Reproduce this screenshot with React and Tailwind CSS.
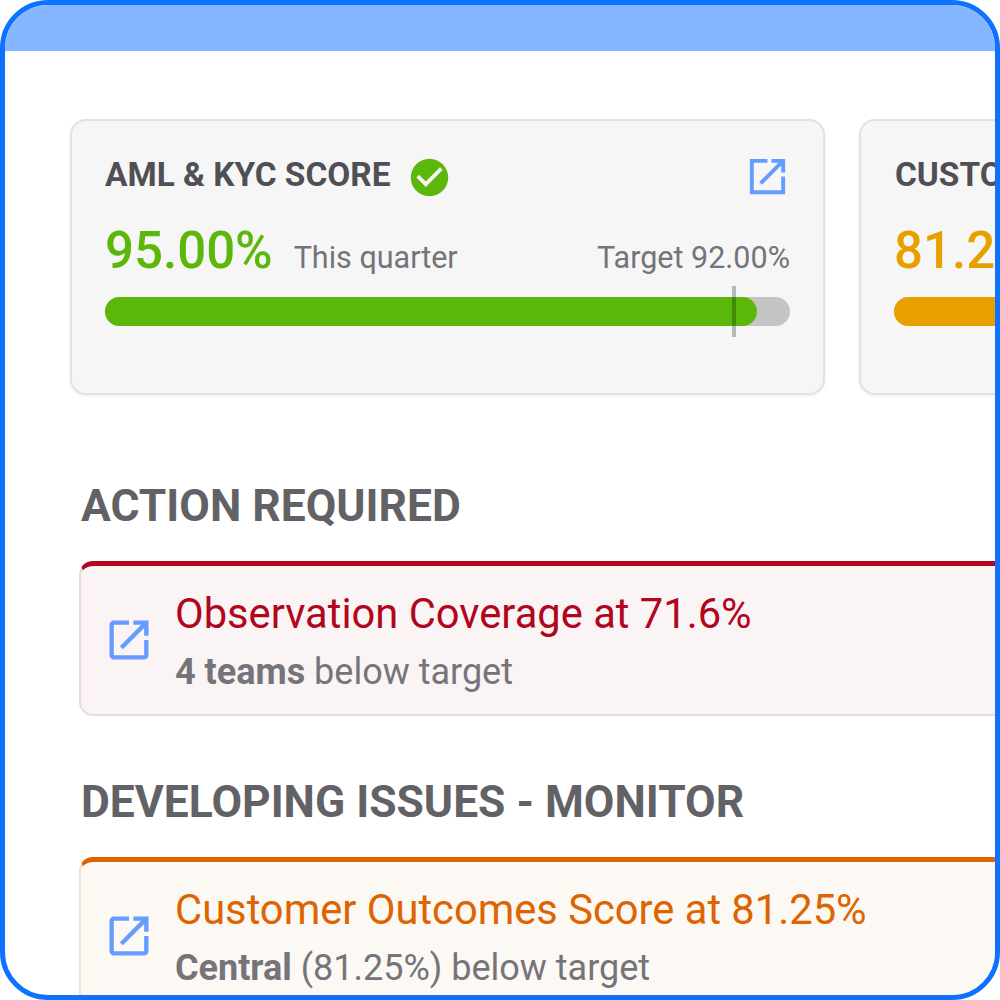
import React from 'react';

const font = { fontFamily: 'Roboto, sans-serif' };

function OpenIcon({ className, round }) {
  const d = round
    ? 'M19 19H5V5h7V3H5c-1.11 0-2 .9-2 2v14c0 1.1.89 2 2 2h14c1.1 0 2-.9 2-2v-7h-2v7zM14 3v2h3.59l-9.83 9.83 1.41 1.41L19 6.41V10h2V3h-7z'
    : 'M19 19H5V5h7V3H3v18h18v-9h-2v7zM14 3v2h3.59l-9.83 9.83 1.41 1.41L19 6.41V10h2V3h-7z';
  return (
    <svg viewBox="0 0 24 24" className={className} fill="#649cff">
      <path d={d} />
    </svg>
  );
}

function CheckBadge() {
  return (
    <svg viewBox="0 0 24 24" className="w-[45px] h-[45px] shrink-0" fill="#5cb70b">
      <path d="M12 2C6.48 2 2 6.48 2 12s4.48 10 10 10 10-4.48 10-10S17.52 2 12 2zm-2 15l-5-5 1.41-1.41L10 14.17l7.59-7.59L19 8l-9 9z" />
    </svg>
  );
}

function ScoreCard() {
  return (
    <div className="w-[755px] h-[276px] shrink-0 rounded-[16px] border-2 border-[#e2e2e2] bg-[#f6f6f6] px-[33px] pt-[28px] shadow-[0_1px_3px_rgba(0,0,0,0.08)]">
      <div className="flex items-center h-[56px]">
        <span className="text-[33.4px] leading-none font-bold text-[#4f4f55] -mt-[4px]">AML &amp; KYC SCORE</span>
        <span className="ml-[17px]"><CheckBadge /></span>
        <OpenIcon className="ml-auto w-[47px] h-[47px] mr-[-1px] -mt-[2px]" />
      </div>
      <div className="flex items-baseline mt-[20px] h-[64px]">
        <span className="text-[51px] leading-none font-medium text-[#5cb70b]">95.00%</span>
        <span className="ml-[21px] text-[30.5px] text-[#74747a]">This quarter</span>
        <span className="ml-auto text-[30.5px] text-[#74747a]">Target 92.00%</span>
      </div>
      <div className="relative mt-[8px] h-[29px] rounded-full bg-[#c4c4c4]">
        <div className="h-full w-[652px] rounded-full bg-[#5cb70b]" />
        <div className="absolute left-[627px] top-[-11px] h-[51px] w-[4px] bg-[#00000040]" />
      </div>
    </div>
  );
}

function OtherCard() {
  return (
    <div className="w-[755px] h-[276px] shrink-0 rounded-[16px] border-2 border-[#e2e2e2] bg-[#f6f6f6] pl-[33px] pt-[28px] shadow-[0_1px_3px_rgba(0,0,0,0.08)]">
      <div className="flex items-center h-[56px]">
        <span className="ml-[1px] text-[33.4px] leading-none font-bold text-[#4f4f55] -mt-[4px]">CUSTOMER OUTCOMES</span>
      </div>
      <div className="flex items-baseline mt-[20px] h-[64px]">
        <span className="text-[51px] leading-none font-medium text-[#e8a000]">81.25%</span>
      </div>
      <div className="mt-[8px] h-[29px] rounded-full bg-[#c4c4c4]">
        <div className="h-full w-[560px] rounded-full bg-[#e8a000]" />
      </div>
    </div>
  );
}

function Alert({ wrap, title, titleColor, children }) {
  return (
    <div className={`w-[1000px] rounded-[14px] border-2 border-t-[5px] pl-[22px] flex items-center ${wrap}`}>
      <OpenIcon round className="w-[52px] h-[52px] shrink-0" />
      <div className="ml-[20px] mt-[2px]">
        <div className={`text-[41.7px] leading-[50px] ${titleColor}`}>{title}</div>
        <div className="mt-[12px] text-[36px] leading-[42px] text-[#74747a]">{children}</div>
      </div>
    </div>
  );
}

export default function App() {
  return (
    <div style={font} className="w-[1000px] h-[1000px] overflow-hidden rounded-[48px] border-[5px] border-[#0f72ff] bg-white">
      <div className="h-[46px] bg-[#85b6ff]" />
      <div className="pl-[65px] pt-[68px]">
        <div className="flex gap-[34px]">
          <ScoreCard />
          <OtherCard />
        </div>
        <h2 className="ml-[11px] mt-[87px] text-[44.4px] leading-[48px] font-bold text-[#626266]">ACTION REQUIRED</h2>
        <div className="ml-[9px] mt-[31px]">
          <Alert wrap="h-[155px] bg-[#faf4f5] border-[#f2d8dc] border-t-[#b0061e]" title="Observation Coverage at 71.6%" titleColor="text-[#b0061e]">
            <b>4 teams</b> below target
          </Alert>
        </div>
        <h2 className="ml-[11px] mt-[62px] text-[44.4px] leading-[48px] font-bold text-[#626266]">DEVELOPING ISSUES - MONITOR</h2>
        <div className="ml-[9px] mt-[31px]">
          <Alert wrap="h-[155px] bg-[#fcf8f4] border-[#f6e0d0] border-t-[#dd6400]" title="Customer Outcomes Score at 81.25%" titleColor="text-[#dd6400]">
            <b>Central</b> (81.25%) below target
          </Alert>
        </div>
      </div>
    </div>
  );
}
